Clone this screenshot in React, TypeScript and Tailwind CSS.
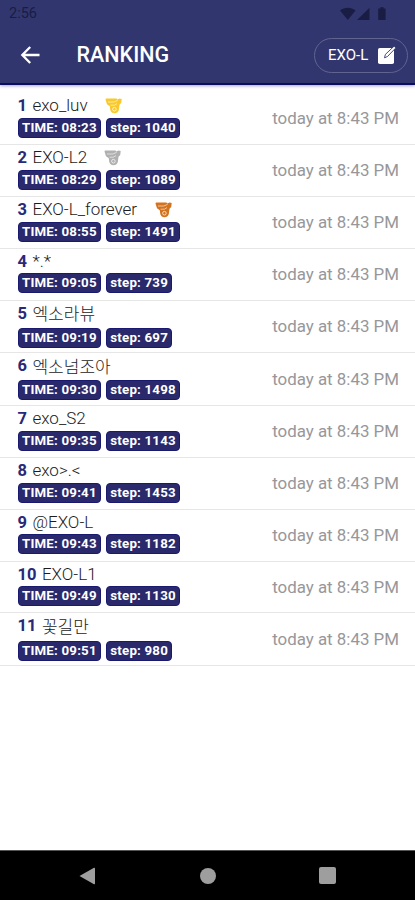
import React from 'react';

interface RankItem {
  rank: number;
  name: string;
  time: string;
  step: number;
  rowClass: string;
  nameClass: string;
  gapClass: string;
  medalClass?: string;
}

const ranking: RankItem[] = [
  { rank: 1, name: 'exo_luv', time: '08:23', step: 1040, rowClass: 'h-[52px]', nameClass: 'w-[56px] pb-[2px]', gapClass: 'mt-[2px]', medalClass: 'text-[#f9c92c]' },
  { rank: 2, name: 'EXO-L2', time: '08:29', step: 1089, rowClass: 'h-[52px]', nameClass: 'w-[55px] pb-[2px]', gapClass: 'mt-[2px]', medalClass: 'text-[#b0b0b0]' },
  { rank: 3, name: 'EXO-L_forever', time: '08:55', step: 1491, rowClass: 'h-[52px]', nameClass: 'w-[106px] pb-[2px]', gapClass: 'mt-[2px]', medalClass: 'text-[#d3731f]' },
  { rank: 4, name: '*.*', time: '09:05', step: 739, rowClass: 'h-[52px]', nameClass: 'pb-[2px]', gapClass: 'mt-px' },
  { rank: 5, name: '엑소라뷰', time: '09:19', step: 697, rowClass: 'h-[52px]', nameClass: 'pt-px', gapClass: 'mt-[4px]' },
  { rank: 6, name: '엑소넘조아', time: '09:30', step: 1498, rowClass: 'h-[53px]', nameClass: 'pt-[2px]', gapClass: 'mt-[4px]' },
  { rank: 7, name: 'exo_S2', time: '09:35', step: 1143, rowClass: 'h-[52px]', nameClass: 'pb-[2px]', gapClass: 'mt-[2px]' },
  { rank: 8, name: 'exo>.<', time: '09:41', step: 1453, rowClass: 'h-[52px]', nameClass: 'pb-[2px]', gapClass: 'mt-[2px]' },
  { rank: 9, name: '@EXO-L', time: '09:43', step: 1182, rowClass: 'h-[52px]', nameClass: 'pb-[2px]', gapClass: 'mt-px' },
  { rank: 10, name: 'EXO-L1', time: '09:49', step: 1130, rowClass: 'h-[51px]', nameClass: 'pb-[2px]', gapClass: 'mt-px' },
  { rank: 11, name: '꽃길만', time: '09:51', step: 980, rowClass: 'h-[53px]', nameClass: 'pt-[3px]', gapClass: 'mt-[5px]' },
];

function Medal({ className }: { className: string }) {
  return (
    <svg viewBox="0 0 17 16" className={`ml-[17px] h-4 w-[17px] shrink-0 ${className}`}>
      <path d="M.5 1.500q0-.9 1-.9h10l.8.8L14.500.6l2.200.5-.5 3.900-1.700 1.700-.6 4.800c-.3 2.300-2.100 3.800-4.400 3.800s-4-1.500-4.300-3.700l-.4-3.400L2 6.300z" fill="currentColor" />
      <path d="M3 4h5.800l3.800-1.600M5.600 7.200h3.800l2.600-1.600" fill="none" stroke="#fff" strokeWidth=".8" opacity=".75" />
      <circle cx="9.400" cy="11.200" r="1.800" fill="none" stroke="#fff" strokeWidth=".9" opacity=".8" />
    </svg>
  );
}

function Badge({ children }: { children: React.ReactNode }) {
  return (
    <span className="flex h-5 items-center rounded-[4px] border border-[#191970] bg-[#29296c] pr-[3px] pb-px pl-[3.5px] text-[13.3px] leading-none font-bold tracking-[0.2px] whitespace-nowrap text-white">
      {children}
    </span>
  );
}

function RankRow({ item }: { item: RankItem }) {
  return (
    <li className={`flex justify-between border-b border-[#e6e6e6] pr-4 pl-[17.5px] ${item.rowClass}`}>
      <div className="pt-[3px]">
        <div className="flex h-5 items-center pb-px text-[17px] leading-5 whitespace-nowrap">
          <span className="mr-[5.5px] text-[16.5px] font-bold text-[#29297a]">{item.rank}</span>
          <span className={`font-light text-[#1c1c1c] ${item.nameClass}`}>{item.name}</span>
          {item.medalClass && <Medal className={item.medalClass} />}
        </div>
        <div className={`flex gap-[5px] ${item.gapClass}`}>
          <Badge>TIME: {item.time}</Badge>
          <Badge>step: {item.step}</Badge>
        </div>
      </div>
      <time className="self-center pt-px text-[16.9px] whitespace-nowrap text-[#97979b]">today at 8:43 PM</time>
    </li>
  );
}

export default function App() {
  return (
    <div className="flex h-[900px] w-[415px] flex-col overflow-hidden bg-white font-[Roboto,'Noto_Sans_CJK_KR',sans-serif]">
      <header className="h-[85px] shrink-0 border-b-2 border-[#0c0c62] bg-[#32366f] shadow-[0_1px_3px_rgba(50,50,140,0.45)]">
        {/* status bar */}
        <div className="flex h-[27px] items-center justify-between pr-[28px] pl-[9px] text-[#191d43]">
          <span className="pt-px text-[14.5px]">2:56</span>
          <svg viewBox="0 0 47 14" className="h-[14px] w-[47px]" fill="currentColor">
            <path d="M0 3.500C4.500-.2 11-.2 15.500 3.500L7.800 13z" />
            <path d="M29.500.8V13H17z" />
            <path d="M38.200 1.600h2V.2h3.400v1.400h2V13h-7.400z" />
          </svg>
        </div>

        {/* title bar */}
        <div className="flex h-[56px] items-center pr-[7px] pl-[20px]">
          <svg viewBox="0 0 20 20" className="h-5 w-5" fill="none" stroke="#fff" strokeWidth="2.3">
            <path d="M19.500 10H2.500M10.200 2 2.300 10l7.900 8" />
          </svg>
          <h1 className="ml-[36.5px] text-[21.5px] font-medium text-white">RANKING</h1>
          <button className="ml-auto flex h-[35px] w-[94px] items-center justify-between rounded-full border border-[#60648f] pr-[10px] pl-[13px] text-[15px] text-white">
            EXO-L
            <svg viewBox="0 0 20 20" className="h-5 w-5">
              <rect x="1" y="3" width="16" height="16" rx="1.8" fill="#fff" />
              <path d="m7.500 12.800.9-3.400 8.700-8.200 1.700 1.700-8.300 8.600z" fill="#fff" stroke="#32366f" strokeWidth=".9" />
            </svg>
          </button>
        </div>
      </header>

      <ul className="grow pt-[8px]">
        {ranking.map((item) => (
          <RankRow key={item.rank} item={item} />
        ))}
      </ul>

      {/* android navigation */}
      <nav className="flex h-[50px] shrink-0 items-center justify-between border-t border-[#555] bg-black pr-[79px] pl-[79px]">
        <svg viewBox="0 0 17 18" className="h-[18px] w-[17px]" fill="#9e9e9e">
          <path d="M.5 9 15 .8q1-.4 1 .7v15q0 1.100-1 .7z" />
        </svg>
        <span className="h-4 w-4 rounded-full bg-[#9e9e9e]" />
        <span className="h-[17px] w-[17px] rounded-[2px] bg-[#9e9e9e]" />
      </nav>
    </div>
  );
}
